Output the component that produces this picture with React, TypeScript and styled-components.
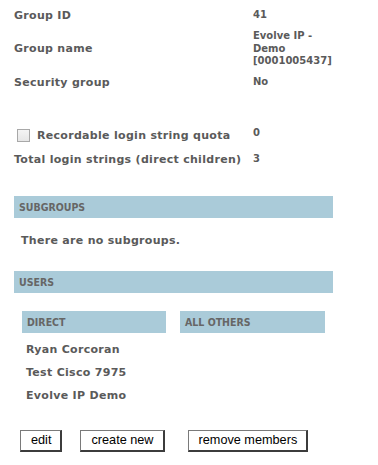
import React from "react";
import styled, { createGlobalStyle } from "styled-components";

const Global = createGlobalStyle`
  html, body { margin: 0; padding: 0; background: #ffffff; }
  body { font-family: Verdana, "DejaVu Sans", sans-serif; color: #5a5a5a; }
`;

const Page = styled.div`
  width: 378px;
  padding: 5px 0 0 14px;
  box-sizing: border-box;
`;

const InfoGrid = styled.div<{ $top?: number }>`
  display: grid;
  grid-template-columns: 239px auto;
  margin-top: ${(p) => p.$top ?? 0}px;
`;

const Label = styled.div<{ $pad?: string }>`
  font-size: 11px;
  font-weight: bold;
  letter-spacing: 0.3px;
  line-height: 13px;
  padding: ${(p) => p.$pad ?? "4px 0"};
  display: flex;
  align-items: center;
  white-space: nowrap;
`;

const Value = styled.div<{ $pad?: string; $shift?: number }>`
  font-size: 10px;
  font-weight: bold;
  line-height: 12.5px;
  padding: ${(p) => p.$pad ?? "4px 0"};
  display: flex;
  align-items: center;
  width: 90px;
  position: relative;
  top: ${(p) => p.$shift ?? 0}px;
`;

const Check = styled.input.attrs({ type: "checkbox" })`
  appearance: none;
  width: 13px;
  height: 13px;
  margin: 0 7px 0 3px;
  border: 1px solid #a8a8a8;
  background: linear-gradient(#f4f4f4, #e6e6e6);
  box-sizing: border-box;
`;

const SectionBar = styled.div<{ $width?: number }>`
  width: ${(p) => p.$width ?? 319}px;
  height: 22px;
  background: #aacbd9;
  box-sizing: border-box;
  padding-left: 5px;
  display: flex;
  align-items: center;
  font-family: "DejaVu Sans Condensed", "DejaVu Sans", sans-serif;
  font-weight: bold;
  font-size: 10.5px;
  color: #666666;
  text-transform: uppercase;
`;

const Note = styled.div`
  font-size: 11px;
  font-weight: bold;
  letter-spacing: 0.3px;
  line-height: 13px;
  padding: 16px 0 0 7px;
  height: 53px;
  box-sizing: border-box;
`;

const Columns = styled.div`
  display: flex;
  gap: 14px;
  margin: 18px 0 0 8px;
`;

const Column = styled.div`
  display: flex;
  flex-direction: column;
`;

const Member = styled.div`
  font-size: 11px;
  font-weight: bold;
  letter-spacing: 0.3px;
  line-height: 13px;
  padding-left: 4px;
  margin-top: 10px;
  &:first-of-type { margin-top: 9px; }
`;

const Buttons = styled.div`
  display: flex;
  margin: 28px 0 0 6px;
`;

const Button = styled.button<{ $gap?: number }>`
  font-family: "Liberation Sans", Arial, sans-serif;
  font-size: 12.7px;
  color: #000;
  background: #ffffff;
  height: 22px;
  padding: 0 9px 0 10px;
  margin-left: ${(p) => p.$gap ?? 0}px;
  border-style: solid;
  border-width: 1px 2px 2px 1px;
  border-color: #7a7a7a #3c3c3c #3c3c3c #7a7a7a;
  border-radius: 0;
  line-height: 18px;
`;

export default function App() {
  return (
    <>
      <Global />
      <Page>
        <InfoGrid>
          <Label>Group ID</Label>
          <Value>41</Value>
          <Label>Group name</Label>
          <Value>
            Evolve IP -
            <br />
            Demo
            <br />
            [0001005437]
          </Value>
          <Label>Security group</Label>
          <Value>No</Value>
        </InfoGrid>
        <InfoGrid $top={31}>
          <Label $pad="5px 0 6px">
            <Check aria-label="Recordable login string quota" />
            Recordable login string quota
          </Label>
          <Value $pad="5px 0 6px" $shift={-2}>0</Value>
          <Label $pad="5px 0">Total login strings (direct children)</Label>
          <Value $pad="5px 0">3</Value>
        </InfoGrid>
        <div style={{ marginTop: 25 }}>
          <SectionBar>Subgroups</SectionBar>
          <Note>There are no subgroups.</Note>
          <SectionBar>Users</SectionBar>
        </div>
        <Columns>
          <Column>
            <SectionBar $width={144}>Direct</SectionBar>
            <Member>Ryan Corcoran</Member>
            <Member>Test Cisco 7975</Member>
            <Member>Evolve IP Demo</Member>
          </Column>
          <Column>
            <SectionBar $width={145}>All others</SectionBar>
          </Column>
        </Columns>
        <Buttons>
          <Button>edit</Button>
          <Button $gap={18}>create new</Button>
          <Button $gap={23}>remove members</Button>
        </Buttons>
      </Page>
    </>
  );
}
